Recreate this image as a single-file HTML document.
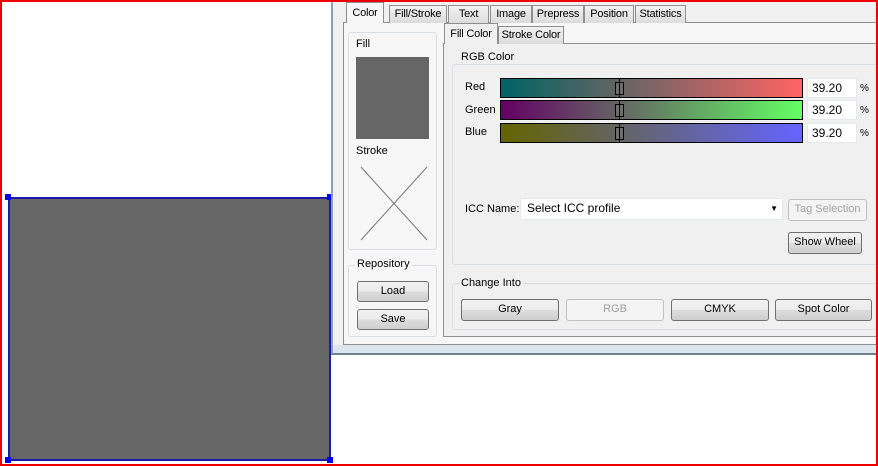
<!DOCTYPE html>
<html><head><meta charset="utf-8"><style>
*{box-sizing:border-box;margin:0;padding:0}
body{width:878px;height:466px;position:relative;background:#fff;font-family:"Liberation Sans",sans-serif;font-size:11px;color:#000;overflow:hidden;white-space:nowrap}
.a{position:absolute}
.frame{position:absolute;left:0;top:0;width:878px;height:466px;border:2px solid #e00;z-index:10;pointer-events:none}
.tab{position:absolute;top:5px;height:18px;border:1px solid #8e8f8f;border-bottom:none;background:linear-gradient(#f2f2f2,#dcdcdc);text-align:center;line-height:16px;letter-spacing:-0.2px}
.grp{position:absolute;border:1px solid #d5dfe5;border-radius:3px}
.btn{position:absolute;border:1px solid #707070;border-radius:3px;background:linear-gradient(#f2f2f2 0,#ebebeb 50%,#dddddd 51%,#cfcfcf);text-align:center;line-height:19px}
.bar{position:absolute;left:500px;width:303px;height:20px;border:1px solid #000}
.thumb{position:absolute;left:114px;top:3px;width:9px;height:13px;border:1px solid #000;background:rgba(120,120,120,.5)}
.thumb:before{content:"";position:absolute;left:3px;top:-4px;width:1px;height:19px;background:#000}
.inp{position:absolute;left:807px;width:50px;height:20px;background:#fff;border:1px solid #e3e9ef;padding-left:4px;line-height:18px;font-size:12px}
.pc{position:absolute;left:860px;font-size:10px}
</style></head><body>
<div class="frame"></div>
<div class="a" style="left:8px;top:197px;width:323px;height:264px;background:#666;border:2px solid #1a1aa8"></div>
<div class="a" style="left:5px;top:194px;width:6px;height:6px;background:#00f"></div>
<div class="a" style="left:327px;top:194px;width:6px;height:6px;background:#00f"></div>
<div class="a" style="left:5px;top:457px;width:6px;height:6px;background:#00f"></div>
<div class="a" style="left:327px;top:457px;width:6px;height:6px;background:#00f"></div>
<div class="a" style="left:331px;top:0;width:547px;height:355px;background:#f0f0f0;border-left:2px solid #8aa0b8;border-bottom:2px solid #6f7f90"></div>
<div class="a" style="left:333px;top:345px;width:545px;height:8px;background:#dde6ef"></div>
<div class="a" style="left:343px;top:22px;width:540px;height:323px;border:1px solid #8e8f8f;background:#f7f7f7"></div>
<div class="tab" style="left:389px;width:58px">Fill/Stroke</div>
<div class="tab" style="left:448px;width:41px">Text</div>
<div class="tab" style="left:490px;width:42px">Image</div>
<div class="tab" style="left:532px;width:52px">Prepress</div>
<div class="tab" style="left:584px;width:50px">Position</div>
<div class="tab" style="left:635px;width:51px">Statistics</div>
<div class="tab" style="left:346px;top:2px;width:38px;height:21px;background:#f7f7f7;line-height:20px">Color</div>
<div class="grp" style="left:348px;top:32px;width:89px;height:218px"></div>
<div class="a" style="left:356px;top:38px">Fill</div>
<div class="a" style="left:356px;top:57px;width:73px;height:82px;background:#666"></div>
<div class="a" style="left:356px;top:145px">Stroke</div>
<svg class="a" style="left:360px;top:166px" width="68" height="75"><path d="M1 1L67 74M67 1L1 74" stroke="#777" stroke-width="1" fill="none"/></svg>
<div class="grp" style="left:348px;top:265px;width:89px;height:72px"></div>
<div class="a" style="left:355px;top:258px;background:#f7f7f7;padding:0 2px">Repository</div>
<div class="btn" style="left:357px;top:281px;width:72px;height:21px">Load</div>
<div class="btn" style="left:357px;top:309px;width:72px;height:21px">Save</div>
<div class="a" style="left:443px;top:43px;width:440px;height:294px;border:1px solid #8e8f8f;background:#f0f0f0"></div>
<div class="tab" style="left:498px;top:26px;width:66px;height:18px">Stroke Color</div>
<div class="tab" style="left:444px;top:23px;width:54px;height:21px;background:#f0f0f0;line-height:20px">Fill Color</div>
<div class="grp" style="left:452px;top:64px;width:430px;height:201px"></div>
<div class="a" style="left:459px;top:51px;background:#f0f0f0;padding:0 2px">RGB Color</div>
<div class="a" style="left:465px;top:81px">Red</div>
<div class="a" style="left:465px;top:104px">Green</div>
<div class="a" style="left:465px;top:126px">Blue</div>
<div class="bar" style="top:78px;background:linear-gradient(90deg,rgb(0,100,100),rgb(255,100,100))"><div class="thumb"></div></div>
<div class="bar" style="top:100px;background:linear-gradient(90deg,rgb(100,0,100),rgb(100,255,100))"><div class="thumb"></div></div>
<div class="bar" style="top:123px;background:linear-gradient(90deg,rgb(100,100,0),rgb(100,100,255))"><div class="thumb"></div></div>
<div class="inp" style="top:78px">39.20</div><div class="pc" style="top:83px">%</div>
<div class="inp" style="top:100px">39.20</div><div class="pc" style="top:105px">%</div>
<div class="inp" style="top:123px">39.20</div><div class="pc" style="top:128px">%</div>
<div class="a" style="left:465px;top:203px">ICC Name:</div>
<div class="a" style="left:520px;top:198px;width:263px;height:22px;background:#fff;border:1px solid #e3e9ef;padding-left:6px;line-height:18px;font-size:12px">Select ICC profile<span style="position:absolute;right:4px;top:1px;font-size:8px">&#9660;</span></div>
<div class="btn" style="left:788px;top:199px;width:79px;height:22px;color:#a0a0a0;border-color:#c0c0c0;background:#f4f4f4">Tag Selection</div>
<div class="btn" style="left:788px;top:232px;width:74px;height:22px">Show Wheel</div>
<div class="grp" style="left:452px;top:283px;width:430px;height:47px"></div>
<div class="a" style="left:459px;top:277px;background:#f0f0f0;padding:0 2px">Change Into</div>
<div class="btn" style="left:461px;top:299px;width:98px;height:22px">Gray</div>
<div class="btn" style="left:566px;top:299px;width:98px;height:22px;color:#a0a0a0;border-color:#c0c0c0;background:#f4f4f4">RGB</div>
<div class="btn" style="left:671px;top:299px;width:98px;height:22px">CMYK</div>
<div class="btn" style="left:775px;top:299px;width:97px;height:22px">Spot Color</div>
</body></html>
